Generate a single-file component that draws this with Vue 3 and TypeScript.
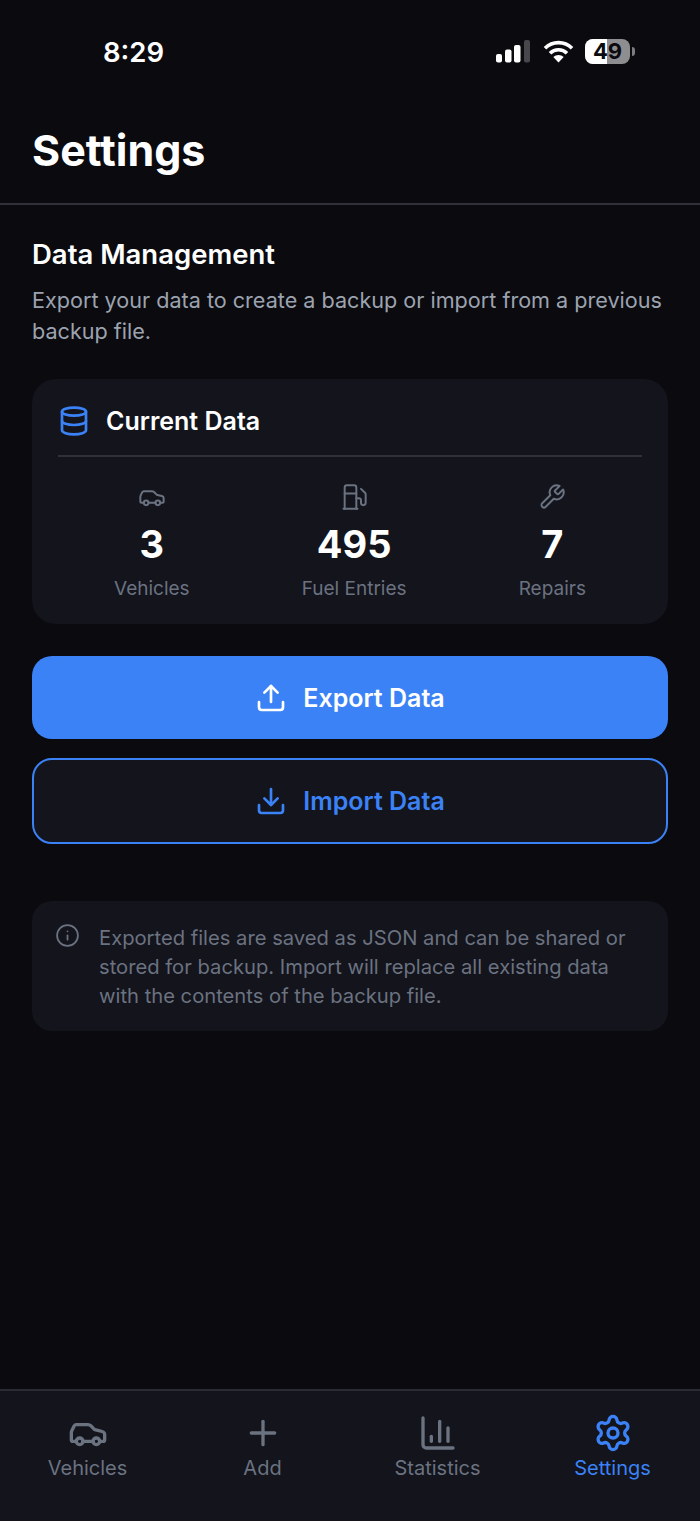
<script setup lang="ts">
const stats = [
  { key: 'car', value: '3', label: 'Vehicles' },
  { key: 'fuel', value: '495', label: 'Fuel Entries' },
  { key: 'wrench', value: '7', label: 'Repairs' },
]

const tabs = [
  { key: 'car', label: 'Vehicles', active: false },
  { key: 'plus', label: 'Add', active: false },
  { key: 'chart', label: 'Statistics', active: false },
  { key: 'gear', label: 'Settings', active: true },
]
</script>

<template>
  <div class="screen">
    <div class="status">
      <span class="time">8:29</span>
      <div class="status-icons">
        <svg width="34" height="23" viewBox="0 0 34 23" fill="#fff">
          <rect x="0" y="14" width="6" height="8.5" rx="2" />
          <rect x="9" y="9.5" width="6.5" height="13" rx="2" />
          <rect x="18" y="5" width="6.5" height="17.5" rx="2" />
          <rect x="28" y="0" width="6" height="22.5" rx="2" fill="#48484c" />
        </svg>
        <svg class="wifi" width="31" height="23" viewBox="0 0 31 23" fill="none" stroke="#fff" stroke-width="3.6">
          <path d="M2 8.2a19.2 19.2 0 0 1 27 0" />
          <path d="M7 13.2a12.2 12.2 0 0 1 17 0" />
          <path d="M15.5 22.5l-5.2-5.4a7.4 7.4 0 0 1 10.4 0z" fill="#fff" stroke="none" />
        </svg>
        <div class="battery">
          <div class="cell"><span class="cell-fill"></span><span class="cell-text">49</span></div>
          <span class="nub"></span>
        </div>
      </div>
    </div>

    <header class="header">
      <h1>Settings</h1>
    </header>

    <main class="content">
      <h2>Data Management</h2>
      <p class="desc">Export your data to create a backup or import from a previous backup file.</p>

      <section class="card">
        <div class="card-head">
          <svg class="ico db" viewBox="0 0 24 24">
            <ellipse cx="12" cy="5" rx="9" ry="3" />
            <path d="M3 5V19A9 3 0 0 0 21 19V5" />
            <path d="M3 12A9 3 0 0 0 21 12" />
          </svg>
          <span>Current Data</span>
        </div>
        <div class="stats">
          <div v-for="s in stats" :key="s.label" class="stat">
            <svg class="ico stat-ico" viewBox="0 0 24 24">
              <template v-if="s.key === 'car'">
                <path d="M19 17h2c.6 0 1-.4 1-1v-3c0-.9-.7-1.7-1.5-1.9C18.7 10.6 16 10 16 10s-1.3-1.4-2.2-2.3c-.5-.4-1.1-.7-1.8-.7H5c-.6 0-1.1.4-1.4.9l-1.4 2.9A3.7 3.7 0 0 0 2 12v4c0 .6.4 1 1 1h2" />
                <circle cx="7" cy="17" r="2" />
                <path d="M9 17h6" />
                <circle cx="17" cy="17" r="2" />
              </template>
              <template v-else-if="s.key === 'fuel'">
                <path d="M3 22h12" />
                <path d="M4 9h10" />
                <path d="M14 22V4a2 2 0 0 0-2-2H6a2 2 0 0 0-2 2v18" />
                <path d="M14 13h2a2 2 0 0 1 2 2v2a2 2 0 0 0 2 2a2 2 0 0 0 2-2V9.83a2 2 0 0 0-.59-1.42L18 5" />
              </template>
              <path v-else d="M14.7 6.3a1 1 0 0 0 0 1.4l1.6 1.6a1 1 0 0 0 1.4 0l3.77-3.77a6 6 0 0 1-7.94 7.94l-6.91 6.91a2.12 2.12 0 0 1-3-3l6.91-6.91a6 6 0 0 1 7.94-7.94l-3.76 3.76z" />
            </svg>
            <div class="stat-value">{{ s.value }}</div>
            <div class="stat-label">{{ s.label }}</div>
          </div>
        </div>
      </section>

      <button class="btn primary">
        <svg class="ico btn-ico" viewBox="0 0 24 24">
          <path d="M21 15v4a2 2 0 0 1-2 2H5a2 2 0 0 1-2-2v-4" />
          <path d="M17 8l-5-5-5 5" />
          <path d="M12 3v12" />
        </svg>
        Export Data
      </button>
      <button class="btn outline">
        <svg class="ico btn-ico" viewBox="0 0 24 24">
          <path d="M21 15v4a2 2 0 0 1-2 2H5a2 2 0 0 1-2-2v-4" />
          <path d="M7 10l5 5 5-5" />
          <path d="M12 15V3" />
        </svg>
        Import Data
      </button>

      <div class="note">
        <svg class="ico note-ico" viewBox="0 0 24 24">
          <circle cx="12" cy="12" r="10" />
          <path d="M12 16v-4" />
          <path d="M12 8h.01" />
        </svg>
        <p>Exported files are saved as JSON and can be shared or stored for backup. Import will replace all existing data with the contents of the backup file.</p>
      </div>
    </main>

    <nav class="tabbar">
      <div v-for="t in tabs" :key="t.label" class="tab" :class="{ active: t.active }">
        <svg class="ico tab-ico" viewBox="0 0 24 24">
          <template v-if="t.key === 'car'">
            <path d="M19 17h2c.6 0 1-.4 1-1v-3c0-.9-.7-1.7-1.5-1.9C18.7 10.6 16 10 16 10s-1.3-1.4-2.2-2.3c-.5-.4-1.1-.7-1.8-.7H5c-.6 0-1.1.4-1.4.9l-1.4 2.9A3.7 3.7 0 0 0 2 12v4c0 .6.4 1 1 1h2" />
            <circle cx="7" cy="17" r="2" />
            <path d="M9 17h6" />
            <circle cx="17" cy="17" r="2" />
          </template>
          <template v-else-if="t.key === 'plus'">
            <path d="M5 12h14" />
            <path d="M12 5v14" />
          </template>
          <template v-else-if="t.key === 'chart'">
            <path d="M3 3v16a2 2 0 0 0 2 2h16" />
            <path d="M18 17V9" />
            <path d="M13 17V5" />
            <path d="M8 17v-3" />
          </template>
          <template v-else>
            <path d="M9.671 4.136a2.34 2.34 0 0 1 4.659 0 2.34 2.34 0 0 0 3.319 1.915 2.34 2.34 0 0 1 2.33 4.033 2.34 2.34 0 0 0 0 3.831 2.34 2.34 0 0 1-2.33 4.033 2.34 2.34 0 0 0-3.319 1.915 2.34 2.34 0 0 1-4.659 0 2.34 2.34 0 0 0-3.32-1.915 2.34 2.34 0 0 1-2.33-4.033 2.34 2.34 0 0 0 0-3.831A2.34 2.34 0 0 1 6.35 6.051a2.34 2.34 0 0 0 3.319-1.915" />
            <circle cx="12" cy="12" r="3" />
          </template>
        </svg>
        <span>{{ t.label }}</span>
      </div>
    </nav>
  </div>
</template>

<style scoped>
.screen {
  height: 1521px;
  display: flex;
  flex-direction: column;
  background: #0a0a0f;
  color: #fff;
  font-family: Inter, "Liberation Sans", sans-serif;
}
.ico {
  fill: none;
  stroke: currentColor;
  stroke-width: 2;
  stroke-linecap: round;
  stroke-linejoin: round;
  flex-shrink: 0;
}
.status {
  height: 104px;
  box-sizing: border-box;
  padding: 35px 65px 0 103px;
  display: flex;
  justify-content: space-between;
  align-items: flex-start;
}
.time {
  font-size: 27.5px;
  line-height: 34px;
  font-weight: 600;
}
.status-icons {
  display: flex;
  align-items: center;
  gap: 11px;
  margin-top: 4px;
}
.wifi {
  margin-left: 2px;
}
.battery {
  display: flex;
  align-items: center;
  gap: 2px;
}
.cell {
  position: relative;
  width: 45px;
  height: 25px;
  border-radius: 8px;
  background: #8e8e90;
  display: flex;
  align-items: center;
  justify-content: center;
}
.cell-fill {
  position: absolute;
  left: 0;
  top: 0;
  bottom: 0;
  width: 22px;
  border-radius: 8px 0 0 8px;
  background: #fff;
}
.cell-text {
  position: relative;
  color: #0a0a0f;
  font-size: 22px;
  font-weight: 700;
  line-height: 25px;
}
.nub {
  width: 3px;
  height: 9px;
  border-radius: 0 3px 3px 0;
  background: #7c7c7e;
}
.header {
  height: 101px;
  box-sizing: border-box;
  padding: 21px 32px 0;
  border-bottom: 2px solid #2f3039;
}
h1 {
  margin: 0;
  font-size: 43px;
  line-height: 50px;
  font-weight: 700;
}
.content {
  flex: 1;
  padding: 31px 32px 0;
}
h2 {
  margin: 0;
  font-size: 27.5px;
  line-height: 36px;
  font-weight: 600;
}
.desc {
  margin: 13px 0 0;
  font-size: 21.6px;
  line-height: 31px;
  color: #9ca3af;
}
.card {
  margin-top: 32px;
  height: 245px;
  box-sizing: border-box;
  padding: 0 26px;
  background: #13141c;
  border-radius: 24px;
}
.card-head {
  height: 78px;
  box-sizing: border-box;
  display: flex;
  align-items: center;
  gap: 16px;
  padding: 7px 0 0;
  border-bottom: 2px solid #2f3039;
  font-size: 25px;
  font-weight: 600;
}
.db {
  width: 32px;
  height: 32px;
  color: #3b82f6;
}
.stats {
  display: flex;
  justify-content: space-around;
  padding-top: 26px;
}
.stat {
  display: flex;
  flex-direction: column;
  align-items: center;
}
.stat-ico {
  width: 28px;
  height: 28px;
  color: #6b7280;
  stroke-width: 1.7;
}
.stat-value {
  margin-top: 10px;
  font-size: 38px;
  line-height: 46px;
  font-weight: 700;
}
.stat-label {
  margin-top: 10px;
  font-size: 19px;
  line-height: 24px;
  color: #6b7280;
}
.btn {
  width: 100%;
  display: flex;
  align-items: center;
  justify-content: center;
  gap: 16px;
  font-family: inherit;
  font-size: 25px;
  font-weight: 600;
  border-radius: 20px;
  box-sizing: border-box;
}
.btn-ico {
  width: 32px;
  height: 32px;
}
.primary {
  margin-top: 32px;
  height: 83px;
  background: #3b82f6;
  color: #fff;
  border: none;
}
.outline {
  margin-top: 19px;
  height: 86px;
  background: #13141c;
  color: #3b82f6;
  border: 2px solid #3b82f6;
}
.note {
  margin-top: 57px;
  height: 130px;
  box-sizing: border-box;
  padding: 22px 24px;
  background: #13141c;
  border-radius: 20px;
  display: flex;
  gap: 19px;
}
.note-ico {
  width: 25px;
  height: 25px;
  margin-left: -1px;
  color: #6b7280;
  stroke-width: 1.7;
}
.note p {
  margin: 0;
  font-size: 20.2px;
  line-height: 29px;
  color: #6b7280;
}
.tabbar {
  height: 132px;
  box-sizing: border-box;
  display: flex;
  background: #13141c;
  border-top: 2px solid #2a2b35;
  padding: 22px 0 0;
}
.tab {
  flex: 1;
  display: flex;
  flex-direction: column;
  align-items: center;
  color: #6b7280;
  font-size: 20px;
  line-height: 30px;
  font-weight: 400;
}
.tab-ico {
  width: 40px;
  height: 40px;
}
.tab.active {
  color: #3b82f6;
}
</style>
